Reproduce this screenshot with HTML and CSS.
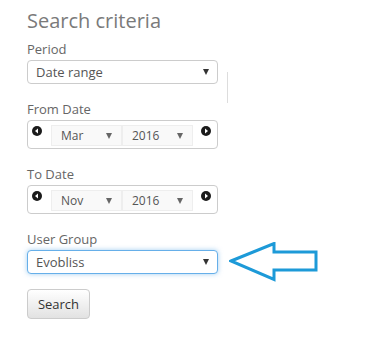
FILE: index.html
```html
<!DOCTYPE html>
<html>
<head>
    <title>Search criteria</title>
    <link rel="stylesheet" href="styles.css">
</head>
<body>
    <div class="panel">
        <h2 class="panel-title">Search criteria</h2>

        <div class="field field-period">
            <div>
                <label class="field-label">Period</label>
                <div class="select-box">
                    <span>Date range</span>
                    <span class="caret"></span>
                </div>
            </div>
            <div class="divider"></div>
        </div>

        <div class="field">
            <label class="field-label">From Date</label>
            <div class="date-picker">
                <svg class="nav-icon" viewBox="0 0 10 10" width="10" height="10">
                    <circle cx="5" cy="5" r="5" fill="#1b1b1b"></circle>
                    <polygon points="3,5 6,2.6 6,7.4" fill="#fff"></polygon>
                </svg>
                <div class="mini-select">
                    <span>Mar</span>
                    <span class="caret caret-light"></span>
                </div>
                <div class="mini-select">
                    <span>2016</span>
                    <span class="caret caret-light"></span>
                </div>
                <svg class="nav-icon" viewBox="0 0 10 10" width="10" height="10">
                    <circle cx="5" cy="5" r="5" fill="#1b1b1b"></circle>
                    <polygon points="7,5 4,2.6 4,7.4" fill="#fff"></polygon>
                </svg>
            </div>
        </div>

        <div class="field">
            <label class="field-label">To Date</label>
            <div class="date-picker">
                <svg class="nav-icon" viewBox="0 0 10 10" width="10" height="10">
                    <circle cx="5" cy="5" r="5" fill="#1b1b1b"></circle>
                    <polygon points="3,5 6,2.6 6,7.4" fill="#fff"></polygon>
                </svg>
                <div class="mini-select">
                    <span>Nov</span>
                    <span class="caret caret-light"></span>
                </div>
                <div class="mini-select">
                    <span>2016</span>
                    <span class="caret caret-light"></span>
                </div>
                <svg class="nav-icon" viewBox="0 0 10 10" width="10" height="10">
                    <circle cx="5" cy="5" r="5" fill="#1b1b1b"></circle>
                    <polygon points="7,5 4,2.6 4,7.4" fill="#fff"></polygon>
                </svg>
            </div>
        </div>

        <div class="field field-group">
            <label class="field-label">User Group</label>
            <div class="group-row">
                <div class="select-box select-focus">
                    <span>Evobliss</span>
                    <span class="caret"></span>
                </div>
                <svg class="pointer" viewBox="0 0 90 40" width="90" height="40">
                    <polygon points="2,19 45,1.5 45,10 87,10 87,28 45,28 45,37.5" fill="none" stroke="#1d9ad8" stroke-width="3"></polygon>
                </svg>
            </div>
        </div>

        <button class="search-btn">Search</button>
    </div>
</body>
</html>
```

FILE: styles.css
```css
* {
    box-sizing: border-box;
}

body {
    margin: 0;
    background-color: #ffffff;
    font-family: 'Open Sans', 'Liberation Sans', Arial, sans-serif;
    color: #555555;
}

.panel {
    padding: 8px 0 0 27px;
}

.panel-title {
    margin: 0 0 6px 0;
    font-size: 20px;
    font-weight: 400;
    line-height: 26px;
    color: #7a7a7a;
}

.field {
    margin-bottom: 16px;
}

.field-period {
    display: flex;
    align-items: flex-start;
}

.divider {
    width: 1px;
    height: 31px;
    margin: 32px 0 -19px 9px;
    background-color: #dddddd;
}

.field-label {
    display: block;
    font-size: 13px;
    line-height: 18px;
    margin-bottom: 2px;
    color: #666666;
}

.select-box {
    width: 191px;
    height: 24px;
    border: 1px solid #cccccc;
    border-radius: 4px;
    padding: 0 8px 0 8px;
    display: flex;
    align-items: center;
    justify-content: space-between;
    font-size: 13px;
    color: #555555;
    background-color: #ffffff;
}

.select-focus {
    border-color: #66afe9;
    box-shadow: 0 0 5px rgba(102, 175, 233, 0.6);
}

.caret {
    width: 0;
    height: 0;
    border-left: 3px solid transparent;
    border-right: 3px solid transparent;
    border-top: 6px solid #333333;
}

.caret-light {
    border-top-color: #666666;
}

.date-picker {
    width: 191px;
    height: 29px;
    border: 1px solid #cccccc;
    border-radius: 4px;
    padding: 4px 6px 0 4px;
    display: flex;
    align-items: flex-start;
}

.nav-icon {
    flex-shrink: 0;
    margin-top: 1px;
}

.date-picker .nav-icon:first-child {
    margin-right: 9px;
}

.date-picker .nav-icon:last-child {
    margin-left: 8px;
}

.mini-select {
    width: 72px;
    height: 21px;
    border: 1px solid #eeeeee;
    background-color: #f9f9f9;
    padding: 0 9px 0 9px;
    display: flex;
    align-items: center;
    justify-content: space-between;
    font-size: 12px;
    color: #555555;
}

.group-row {
    display: flex;
    align-items: center;
}

.pointer {
    margin: -8px 0 -8px 11px;
    flex-shrink: 0;
}

.field-group {
    margin-bottom: 15px;
}

.search-btn {
    width: 63px;
    height: 30px;
    border: 1px solid #cccccc;
    border-radius: 4px;
    background-image: linear-gradient(to bottom, #ffffff 0%, #e2e2e2 100%);
    font-family: 'Open Sans', 'Liberation Sans', Arial, sans-serif;
    font-size: 13px;
    color: #333333;
    padding: 0;
    cursor: pointer;
}
```
